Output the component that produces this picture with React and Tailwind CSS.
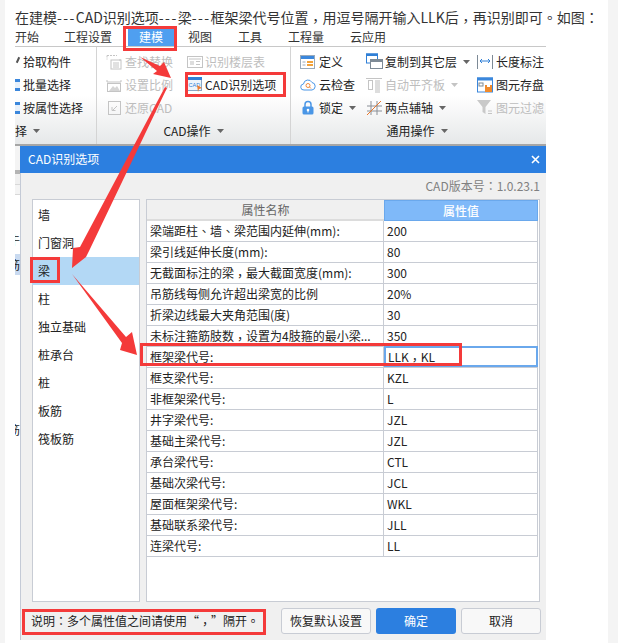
const Ic = ({ children, w = 16, h = 16, className = "" }) => (
  <svg width={w} height={h} viewBox={`0 0 ${w} ${h}`} className={`shrink-0 ${className}`} fill="none">{children}</svg>
);
const Caret = ({ c = "#666" }) => (
  <svg width="7" height="4" viewBox="0 0 7 4" className="shrink-0"><path d="M0 0h7L3.5 4z" fill={c} /></svg>
);
const G = "#c4c4c4";
const Find = () => <Ic><path d="M1 1.5h10M1 1.5v4M14 5v3" stroke={G} strokeDasharray="2 1" /><rect x="5" y="6" width="10" height="9" stroke={G} /><path d="M7 9h6M7 11h6M7 13h6" stroke={G} /></Ic>;
const Floors = () => <Ic><rect x="0.5" y="2.5" width="15" height="11" stroke={G} /><path d="M2 5h12" stroke={G} /><rect x="3" y="7" width="4" height="4" fill="#ddd" /><path d="M9 7.5h4M9 10.5h4" stroke={G} /></Ic>;
const Scale = () => <Ic><path d="M1 5h14M1 5V3M15 5V3" stroke={G} /><rect x="1.5" y="6.5" width="13" height="8" stroke={G} /><path d="M3 14l4-5 2 2 2-2 3 5z" fill="#d5d5d5" /></Ic>;
const Restore = () => <Ic><rect x="2.5" y="1.5" width="12" height="13" stroke={G} /><path d="M11 6l-4 4M6 7v3.5h3.5" stroke={G} /></Ic>;
const CadI = () => <Ic h={15}><rect x="0.5" y="0.5" width="14" height="13" fill="#eef4fb" stroke="#8aa7c6" /><rect x="0" y="0" width="15" height="3" fill="#2f7fd6" /><text x="1.5" y="10" fontSize="5.5" fill="#2f7fd6" fontFamily="Liberation Sans">CAD</text><path d="M10 8l5 3-3 1-1 3z" fill="#ef7b2d" /></Ic>;
const Define = () => <Ic><rect x="0.5" y="1.5" width="14" height="13" fill="#fff" stroke="#9ab" /><rect x="1" y="2" width="13" height="3" fill="#3b87dc" /><rect x="7" y="7" width="6" height="2" fill="#f2a23a" /><rect x="7" y="10" width="6" height="2" fill="#f2a23a" /><path d="M2.5 8h3M2.5 11h3" stroke="#9ab" /></Ic>;
const Cloud = () => <Ic><path d="M4 13a3 3 0 0 1-.5-6A4.5 4.5 0 0 1 12 5.5 3.8 3.8 0 0 1 12 13z" stroke="#4a96e6" fill="#fff" /><circle cx="8" cy="8.5" r="2" stroke="#ef8a3c" /><path d="M9.5 10l1.5 1.5" stroke="#ef8a3c" /></Ic>;
const Lock = () => <Ic h={15}><path d="M5 7V4.5a3 3 0 0 1 6 0V7" stroke="#4a96e6" strokeWidth="1.5" /><rect x="2.5" y="6.5" width="11" height="8" rx="1.5" fill="#4a96e6" /><circle cx="8" cy="10" r="1.3" fill="#fff" /><path d="M8 10v2.5" stroke="#fff" /></Ic>;
const Copy = () => <Ic w={17} h={17}><rect x="0.5" y="1" width="11" height="9" fill="#fff" stroke="#2f7fd6" /><rect x="0" y="0.5" width="12" height="2.5" fill="#2f7fd6" /><rect x="4.5" y="6.5" width="12" height="9" fill="#fff" stroke="#7d8a96" /><rect x="4.5" y="6.5" width="12" height="2.5" fill="#7d8a96" /></Ic>;
const Align = () => <Ic w={17} h={16}><rect x="2.5" y="3.5" width="4" height="9" stroke={G} /><rect x="9" y="3" width="5" height="13" fill="#ddd" /><path d="M0 1.5h16" stroke={G} /></Ic>;
const Axis = () => <Ic w={17} h={16}><path d="M5 1v14M11 1v14M1 6h15M1 11h15" stroke="#8a8f96" /><path d="M1 15L15 1" stroke="#e8762b" /></Ic>;
const Len = () => <Ic><path d="M0.5 1v14M15.5 1v14" stroke="#7d8a96" /><path d="M3 7h10M5 5L3 7l2 2M11 5l2 2-2 2" stroke="#2f7fd6" /></Ic>;
const Save = () => <Ic><rect x="0.5" y="1" width="15" height="14" fill="#fff" stroke="#3b87dc" /><rect x="0" y="0.5" width="16" height="3" fill="#3b87dc" /><rect x="2" y="6" width="4" height="3" stroke="#7d8a96" /><rect x="8" y="8" width="7" height="7" fill="#f08a2c" /><rect x="10" y="8" width="3" height="2" fill="#fff" /></Ic>;
const Filter = () => <Ic h={15}><path d="M0 0h14L8.5 7v7L5.5 12V7z" fill="#c9c9c9" /><path d="M11 11h4M11 13.5h4" stroke={G} /></Ic>;

const TC = '"Noto Sans CJK TC", "Noto Sans CJK SC", sans-serif';
const P = ({ children }) => <span style={{ fontFamily: TC }}>{children}</span>;
const C = () => <span className="relative top-[3px]" style={{ fontFamily: TC }}>，</span>;
const H = () => <span className="tracking-[1.4px]">---</span>;

const Item = ({ icon, text, off, caret, cw }) => (
  <div className="h-[23px] flex items-center">
    <span className="flex items-center shrink-0" style={{ width: cw }}>{icon}</span>
    <span className={`text-[12px] leading-[16px] whitespace-nowrap ${off ? "text-[#bdbdbd]" : "text-[#222]"}`}>{text}</span>
    {caret && <span className="ml-[6px]"><Caret c={off ? "#c4c4c4" : "#666"} /></span>}
  </div>
);
const Cut = ({ text, kind }) => (
  <div className="h-[23px] flex items-center text-[12px]">
    <span className="w-[8px] h-[14px] shrink-0 flex items-center">
      {kind === "pen" && <span className="block w-[2px] h-[6px] bg-[#555] rotate-[25deg] ml-[2px] -mt-[4px]" />}
      {kind === "blue" && <span className="block w-[5px] h-[12px] bg-[#e8f1fb] border-y-[3px] border-[#3b87dc]" />}
    </span>
    {text}
  </div>
);

const rows = [
  [<>梁端距柱<P>、</P>墙<P>、</P>梁范围内延伸(mm):</>, "200"],
  ["梁引线延伸长度(mm):", "80"],
  [<>无截面标注的梁<C />最大截面宽度(mm):</>, "300"],
  ["吊筋线每侧允许超出梁宽的比例", "20%"],
  ["折梁边线最大夹角范围(度)", "30"],
  [<>未标注箍筋肢数<C />设置为4肢箍的最小梁...</>, "350"],
  ["框架梁代号:", <span>LLK<C />KL</span>, true],
  ["框支梁代号:", "KZL"],
  ["非框架梁代号:", "L"],
  ["井字梁代号:", "JZL"],
  ["基础主梁代号:", "JZL"],
  ["承台梁代号:", "CTL"],
  ["基础次梁代号:", "JCL"],
  ["屋面框架梁代号:", "WKL"],
  ["基础联系梁代号:", "JLL"],
  ["连梁代号:", "LL"],
];
const cats = ["墙", "门窗洞", "梁", "柱", "独立基础", "桩承台", "桩", "板筋", "筏板筋"];

export default function App() {
  return (
    <div className="relative w-[618px] h-[643px] overflow-hidden flex bg-[#f4f4f4] text-[#222]" style={{ fontFamily: '"Noto Sans CJK SC", "Noto Sans", sans-serif' }}>
      <div className="w-[5px] shrink-0" />
      <div className="w-[603px] shrink-0 bg-white">
        <div className="h-[28px] pl-[10px] pt-[7px] text-[14px] leading-[20px] whitespace-nowrap text-[#333]">
          在建模<H />CAD识别选项<H />梁<H />框架梁代号位置<C />用逗号隔开输入LLK后<C />再识别即可<P>。</P>如图<P>：</P>
        </div>
        <div className="ml-[10px] w-[531px]">
          <div className="h-[19px] flex items-stretch text-[12px] leading-[16px] border-b border-[#c8c8c8] text-[#333]">
            <span className="w-[49px] pt-[1px]">开始</span>
            <span className="w-[64px] pt-[1px]">工程设置</span>
            <span className="w-[46px] bg-[#4f9ff0] text-white text-center pt-[1px]">建模</span>
            <span className="ml-[14px] w-[50px] pt-[1px]">视图</span>
            <span className="w-[50px] pt-[1px]">工具</span>
            <span className="w-[62px] pt-[1px]">工程量</span>
            <span className="pt-[1px]">云应用</span>
          </div>
          <div className="h-[99px] flex border-b-[2px] border-[#a6a6a6] bg-linear-to-b from-white from-50% to-[#e6e8e9]">
            <div className="w-[82px] border-r border-[#d4d4d4] flex flex-col">
              <div className="flex-1 pt-[3px]">
                <Cut text="拾取构件" kind="pen" />
                <Cut text="批量选择" kind="blue" />
                <Cut text="按属性选择" kind="blue" />
              </div>
              <div className="h-[27px] flex items-center gap-[6px] text-[12px] pb-[2px]">择 <Caret /></div>
            </div>
            <div className="w-[194px] border-r border-[#d4d4d4] flex flex-col">
              <div className="flex-1 pt-[3px] pl-[9px] flex">
                <div className="w-[81px]">
                  <Item icon={<Find />} cw={19} text="查找替换" off />
                  <Item icon={<Scale />} cw={19} text="设置比例" off />
                  <Item icon={<Restore />} cw={19} text="还原CAD" off />
                </div>
                <div>
                  <Item icon={<Floors />} cw={18} text="识别楼层表" off />
                  <Item icon={<CadI />} cw={18} text="CAD识别选项" />
                </div>
              </div>
              <div className="h-[27px] flex items-center justify-center gap-[6px] text-[12px] pb-[2px]">CAD操作 <Caret /></div>
            </div>
            <div className="flex-1 flex flex-col min-w-0 overflow-hidden">
              <div className="flex-1 pt-[3px] pl-[9px] flex">
                <div className="w-[66px]">
                  <Item icon={<Define />} cw={19} text="定义" />
                  <Item icon={<Cloud />} cw={19} text="云检查" />
                  <Item icon={<Lock />} cw={19} text="锁定" caret />
                </div>
                <div className="w-[111px]">
                  <Item icon={<Copy />} cw={19} text="复制到其它层" caret />
                  <Item icon={<Align />} cw={19} text="自动平齐板" off caret />
                  <Item icon={<Axis />} cw={19} text="两点辅轴" caret />
                </div>
                <div>
                  <Item icon={<Len />} cw={19} text="长度标注" />
                  <Item icon={<Save />} cw={19} text="图元存盘" />
                  <Item icon={<Filter />} cw={19} text="图元过滤" off />
                </div>
              </div>
              <div className="h-[27px] flex items-center justify-center gap-[6px] text-[12px] pb-[2px] pr-[3px]">通用操作 <Caret /></div>
            </div>
          </div>
          <div className="flex">
            <div className="w-[5px] shrink-0 overflow-hidden bg-white text-[12px] leading-[16px] h-[494px] whitespace-nowrap">
              <div className="h-[24px] bg-[#f4f4f4]" />
              <div className="h-[4px] bg-[#b4b4b4]" />
              <div className="h-[11px] bg-[#f0f0f0] border-b border-[#d8d8d8]" />
              <div className="h-[10px] bg-[#f4f4f4] border-b border-[#d8d8d8]" />
              <div className="h-[37px]" />
              <div className="h-[16px] -ml-[7px]">牛</div>
              <div className="h-[21px] mt-[6px] bg-[#c9daf0] -ml-[7px] leading-[21px]">筋</div>
              <div className="mt-[147px] h-[16px] -ml-[7px]">筋</div>
            </div>
            <div className="w-[526px] h-[494px] bg-[#f0f0f0] flex flex-col">
              <div className="h-[27px] bg-[#2c7fe0] flex items-center justify-between text-white text-[12px] pl-[8px] pr-[4px] pb-[2px]">
                <span>CAD识别选项</span>
                <svg width="9" height="9" viewBox="0 0 9 9" className="mr-[2px] mt-[2px]"><path d="M1 1l7 7M8 1L1 8" stroke="#fff" strokeWidth="1.6" /></svg>
              </div>
              <div className="flex-1 flex flex-col border-l border-[#c4cad6]">
                <div className="h-[26px] flex items-center justify-end pr-[6px] text-[12px] text-[#808080]">CAD版本号<P>：</P>1.0.23.1</div>
                <div className="h-[403px] flex pl-[11px] gap-[6px]">
                  <div className="w-[108px] bg-white border border-[#c8ccd4] py-[1px]">
                    {cats.map((c, i) => (
                      <div key={c} className={`h-[28px] flex items-center text-[12px] ${i === 2 ? "bg-[#b3d8f5] -ml-[1px] pl-[6px]" : "pl-[5px]"}`}>{c}</div>
                    ))}
                  </div>
                  <div className="w-[394px] bg-white border border-[#c8ccd4]">
                    <div className="w-[391px] flex h-[21px] text-[12px]">
                      <div className="w-[237px] bg-[#f0f0f0] border-b-[2px] border-[#dcdcdc] flex items-center justify-center text-[#666]">属性名称</div>
                      <div className="flex-1 bg-[#7fb9f9] border border-[#6aa8ec] flex items-center justify-center text-white font-medium">属性值</div>
                    </div>
                    {rows.map(([a, b, sel], i) => (
                      <div key={i} className="w-[391px] flex h-[21px] text-[12px] leading-[16px] border-b border-[#c8ccd4]">
                        <div className="w-[237px] border-r border-[#c8ccd4] pl-[3px] flex items-center whitespace-nowrap overflow-hidden">{a}</div>
                        {sel ? (
                          <div className="flex-1 h-[21px] -mt-[1px] pl-[2px] flex items-center border-[2px] border-[#6aa8ec]">{b}</div>
                        ) : (
                          <div className="flex-1 pl-[3px] flex items-center border-r border-[#c8ccd4]">{b}</div>
                        )}
                      </div>
                    ))}
                  </div>
                </div>
                <div className="flex items-center h-[26px] mt-[6px] pl-[10px] text-[12px]">
                  <div className="w-[250px] whitespace-nowrap">说明<P>：</P>多个属性值之间请使用“<C />”隔开<P>。</P></div>
                  <button className="w-[90px] h-[26px] ml-0 rounded-[3px] border border-[#c8ccd4] bg-[#f8f8f8]">恢复默认设置</button>
                  <button className="w-[80px] h-[26px] ml-[5px] rounded-[3px] bg-[#2c7fe0] text-white">确定</button>
                  <button className="w-[80px] h-[26px] ml-[5px] rounded-[3px] border border-[#c8ccd4] bg-[#f8f8f8]">取消</button>
                </div>
              </div>
            </div>
          </div>
        </div>
      </div>
      <div className="flex-1" />

      {/* Annotation overlays */}
      <div className="absolute left-[123px] top-[26px] w-[54px] h-[25px] border-[3px] border-[#f43a3a]" />
      <div className="absolute left-[185px] top-[72px] w-[101px] h-[25px] border-[3px] border-[#f43a3a]" />
      <div className="absolute left-[30px] top-[257px] w-[30px] h-[26px] border-[3px] border-[#f43a3a]" />
      <div className="absolute left-[140px] top-[343px] w-[322px] h-[23px] border-[3px] border-[#f43a3a]" />
      <div className="absolute left-[22px] top-[609px] w-[244px] h-[26px] border-[3px] border-[#f43a3a]" />
      <svg className="absolute left-0 top-0 pointer-events-none" width="618" height="643" viewBox="0 0 618 643">
        <polygon points="140,57 160,66 164,62 171,78 153,74 157,71" fill="#f43a3a" />
        <polygon points="167,88 89,251 86,257 72,268 73,248 80,247 165,87" fill="#f43a3a" />
        <polygon points="72,274 126,337 132,332 137,355 120,350 122,343" fill="#f43a3a" />
      </svg>
    </div>
  );
}
